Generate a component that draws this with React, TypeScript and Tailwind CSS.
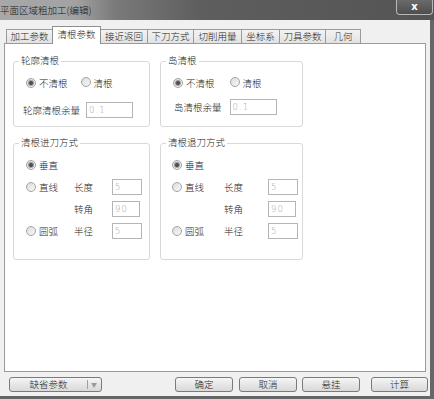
import React from "react";

function Radio({ checked }: { checked?: boolean }) {
  return (
    <span className="inline-flex w-[10px] h-[10px] shrink-0 items-center justify-center rounded-full border border-[#a3a3a3] bg-[linear-gradient(135deg,#dcdcdc,#f8f8f8)]">
      {checked && <span className="w-[4px] h-[4px] rounded-full bg-[#4d4d4d] shadow-[0_0_0_1px_#9a9a9a]" />}
    </span>
  );
}

function Field({ v, w }: { v: string; w: string }) {
  return (
    <div className={"h-[16px] border border-[#b5b5b5] bg-white pl-[2px] text-[8.5px] leading-[14px] tracking-[1px] text-[#a3a3a3] font-['DejaVu_Sans',sans-serif] " + w}>
      {v}
    </div>
  );
}

function Group({ title, className, children }: { title: string; className: string; children?: React.ReactNode }) {
  return (
    <div className={"relative rounded-[3px] border border-[#d9d9d9] " + className}>
      <span className="absolute left-[5px] top-[-8px] bg-white px-[2px] leading-[13px]">{title}</span>
      {children}
    </div>
  );
}

function Tab({ label, w, active }: { label: string; w: string; active?: boolean }) {
  if (active)
    return (
      <div className={"relative z-10 -mb-px -ml-px flex h-[18px] items-start justify-center border border-b-0 border-[#8e8f8f] bg-white pt-[1px] leading-[13px] " + w}>
        {label}
      </div>
    );
  return (
    <div className={"-ml-px flex h-[14px] items-center justify-center border border-b-0 border-[#9a9a9a] bg-[linear-gradient(to_bottom,#f3f3f3,#e2e2e2)] leading-[13px] " + w}>
      {label}
    </div>
  );
}

function Btn({ label, className }: { label: string; className: string }) {
  return (
    <div className={"flex h-[15px] items-center justify-center rounded-[3px] border border-[#7a7a7a] bg-[linear-gradient(to_bottom,#f6f6f6,#e6e6e6_50%,#d9d9d9)] leading-[13px] " + className}>
      {label}
    </div>
  );
}

function MethodGroup({ title, cols, fieldW }: { title: string; cols: string; fieldW: string }) {
  return (
    <Group title={title} className="h-[117px]">
      <div className={"grid pt-[10px] " + cols}>
        <div className="flex h-[22px] items-center gap-[3px]">
          <Radio checked />
          <span>垂直</span>
        </div>
        <div />
        <div />
        <div className="flex h-[22px] items-center gap-[3px]">
          <Radio />
          <span>直线</span>
        </div>
        <div className="flex h-[22px] items-center">长度</div>
        <div className="flex h-[22px] items-center">
          <Field v="5" w={fieldW} />
        </div>
        <div />
        <div className="flex h-[22px] items-center">转角</div>
        <div className="flex h-[22px] items-center">
          <Field v="90" w="w-[28px]" />
        </div>
        <div className="flex h-[22px] items-center gap-[3px]">
          <Radio />
          <span>圆弧</span>
        </div>
        <div className="flex h-[22px] items-center">半径</div>
        <div className="flex h-[22px] items-center">
          <Field v="5" w={fieldW} />
        </div>
      </div>
    </Group>
  );
}

export default function App() {
  return (
    <div className="flex h-[399px] w-[434px] flex-col bg-[#666666] text-[9.5px] font-light text-[#262626] font-['Noto_Sans_CJK_SC',sans-serif]">
      {/* title bar */}
      <div className="flex h-[20px] shrink-0 items-start justify-between bg-[linear-gradient(to_right,#a8a8a8_0px,#a2a2a2_75px,#7a7a7a_115px,#5e5e5e_200px,#545454_100%)]">
        <span className="pt-[3px] leading-[14px] text-[#151515]">平面区域粗加工(编辑)</span>
        <div className="mr-[1px] flex h-[15px] w-[37px] items-center justify-center rounded-b-[4px] border border-t-0 border-[#b8b8b8] bg-[linear-gradient(to_bottom,#6a6a6a,#4e4e4e)] text-[10px] font-bold leading-[12px] text-white font-['DejaVu_Sans',sans-serif]">
          x
        </div>
      </div>
      {/* body */}
      <div className="mb-[3px] mr-[4px] flex flex-1 flex-col bg-[#f0f0f0]">
        <div className="pl-[4px] pt-[6px]">
          <div className="flex h-[17px] items-end pl-[3px]">
            <Tab label="加工参数" w="w-[47px]" />
            <Tab label="清根参数" w="w-[49px]" active />
            <Tab label="接近返回" w="w-[48px]" />
            <Tab label="下刀方式" w="w-[47px]" />
            <Tab label="切削用量" w="w-[49px]" />
            <Tab label="坐标系" w="w-[39px]" />
            <Tab label="刀具参数" w="w-[47px]" />
            <Tab label="几何" w="w-[36px]" />
          </div>
          <div className="h-[329px] w-[422px] border border-[#9a9a9a] bg-white pl-[8px] pt-[17px]">
            <div className="grid grid-cols-[137px_143px] gap-x-[10px] gap-y-[16px]">
              <Group title="轮廓清根" className="h-[66px]">
                <div className="flex h-[22px] items-center pl-[12px] mt-[10px]">
                  <Radio checked />
                  <span className="ml-[3px]">不清根</span>
                  <span className="ml-[13px]">
                    <Radio />
                  </span>
                  <span className="ml-[3px]">清根</span>
                </div>
                <div className="mt-[5px] flex h-[22px] items-center pl-[9px]">
                  <span>轮廓清根余量</span>
                  <span className="ml-[6px]">
                    <Field v="0.1" w="w-[47px]" />
                  </span>
                </div>
              </Group>
              <Group title="岛清根" className="h-[66px]">
                <div className="flex h-[22px] items-center pl-[12px] mt-[10px]">
                  <Radio checked />
                  <span className="ml-[3px]">不清根</span>
                  <span className="ml-[15px]">
                    <Radio />
                  </span>
                  <span className="ml-[3px]">清根</span>
                </div>
                <div className="mt-[2px] flex h-[22px] items-center pl-[13px]">
                  <span>岛清根余量</span>
                  <span className="ml-[8px]">
                    <Field v="0.1" w="w-[47px]" />
                  </span>
                </div>
              </Group>
              <MethodGroup title="清根进刀方式" cols="grid-cols-[48px_38px_30px] pl-[12px]" fieldW="w-[30px]" />
              <MethodGroup title="清根退刀方式" cols="grid-cols-[52px_44px_30px] pl-[11px]" fieldW="w-[30px]" />
            </div>
          </div>
        </div>
        {/* bottom buttons */}
        <div className="flex pl-[9px] pt-[5px]">
          <div className="flex h-[15px] w-[93px] items-center rounded-[3px] border border-[#7a7a7a] bg-[linear-gradient(to_bottom,#f6f6f6,#e6e6e6_50%,#d9d9d9)] leading-[13px]">
            <span className="flex w-[77px] justify-center">缺省参数</span>
            <span className="h-[9px] w-px bg-[#a0a0a0]" />
            <span className="ml-[3px] text-[6px] leading-[8px] text-[#9a9a9a]">▼</span>
          </div>
          <Btn label="确定" className="ml-[73px] w-[58px]" />
          <Btn label="取消" className="ml-[6px] w-[58px]" />
          <Btn label="悬挂" className="ml-[5px] w-[58px]" />
          <Btn label="计算" className="ml-[11px] w-[57px]" />
        </div>
      </div>
    </div>
  );
}
